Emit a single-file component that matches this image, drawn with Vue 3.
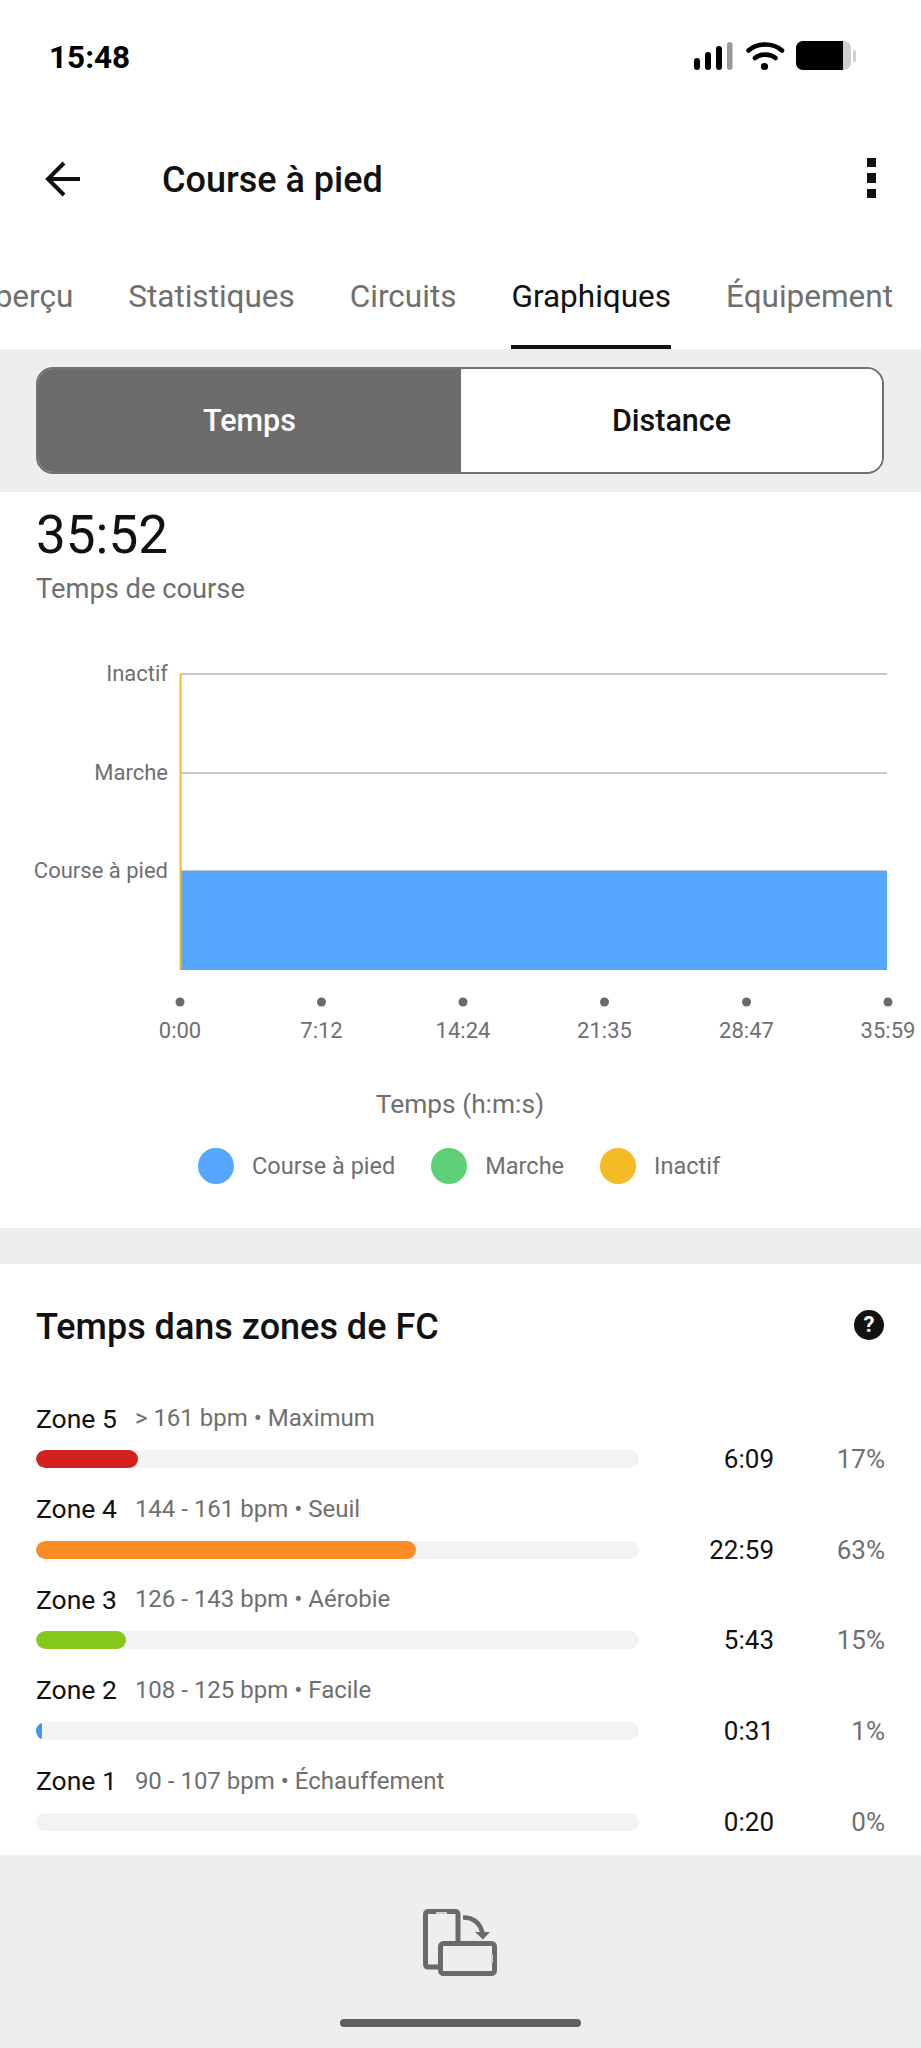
<template>
  <div class="page">
    <div class="status-bar">
      <span class="clock">15:48</span>
      <svg class="status-icons" width="163" height="32" viewBox="0 0 163 32">
        <rect x="0" y="17" width="6" height="12" rx="3" fill="#000" />
        <rect x="11" y="11" width="6" height="18" rx="3" fill="#000" />
        <rect x="22" y="5" width="6" height="24" rx="3" fill="#000" />
        <rect x="33" y="1" width="5.5" height="28" rx="2.7" fill="#999" />
        <path d="M54.5 9.5C63.5 1.5 79 1.5 88 9.5" fill="none" stroke="#000" stroke-width="4.6" stroke-linecap="round" />
        <path d="M61 17C66.5 12.5 76 12.5 81.5 17" fill="none" stroke="#000" stroke-width="4.6" stroke-linecap="round" />
        <circle cx="70.5" cy="25.5" r="3.6" fill="#000" />
        <path d="M109 0H149V29H109C105 29 102 26 102 22V7C102 3 105 0 109 0Z" fill="#000" />
        <path d="M149 0C154 0 157 3 157 7V22C157 26 154 29 149 29Z" fill="#cfcfcf" />
        <rect x="159" y="9" width="3" height="12" rx="1.5" fill="#cfcfcf" />
      </svg>
    </div>

    <header class="app-header">
      <svg class="back-icon" width="36" height="36" viewBox="0 0 36 36">
        <path d="M19 2L3 18L19 34M3 18H35" fill="none" stroke="#111" stroke-width="4" />
      </svg>
      <h1 class="title">Course à pied</h1>
      <div class="kebab">
        <span></span>
        <span></span>
        <span></span>
      </div>
    </header>

    <nav class="tabs">
      <span v-for="tab in tabs" :key="tab" class="tab" :class="{ active: tab === 'Graphiques' }">{{ tab }}</span>
    </nav>

    <div class="segment-wrap">
      <div class="segment">
        <button class="segment-btn selected">Temps</button>
        <button class="segment-btn">Distance</button>
      </div>
    </div>

    <section class="chart-card">
      <div class="total">35:52</div>
      <div class="total-label">Temps de course</div>

      <svg class="chart" width="921" height="549" viewBox="0 0 921 549">
        <g v-for="row in yRows" :key="row.label">
          <line x1="181" x2="887" :y1="row.y" :y2="row.y" stroke="#c9c9c9" stroke-width="2" />
          <text x="168" :y="row.y + 7" text-anchor="end" class="axis-text">{{ row.label }}</text>
        </g>
        <rect x="181" y="272" width="706" height="99" fill="#55a6ff" />
        <line x1="180.5" x2="180.5" y1="75" y2="371" stroke="#f5bb27" stroke-width="2" />
        <g v-for="tick in xTicks" :key="tick.label">
          <circle :cx="tick.x" cy="403" r="4.5" fill="#6a6a6a" />
          <text :x="tick.x" y="439" text-anchor="middle" class="axis-text">{{ tick.label }}</text>
        </g>
        <text x="460" y="514" text-anchor="middle" class="axis-title">Temps (h:m:s)</text>
      </svg>

      <div class="legend">
        <div v-for="item in legend" :key="item.label" class="legend-item">
          <span class="legend-dot" :style="{ background: item.color }"></span>
          <span>{{ item.label }}</span>
        </div>
      </div>
    </section>

    <section class="zones-card">
      <div class="zones-head">
        <h2 class="zones-title">Temps dans zones de FC</h2>
        <span class="help">?</span>
      </div>

      <div v-for="zone in zones" :key="zone.name" class="zone">
        <div class="zone-label">
          <span class="zone-name">{{ zone.name }}</span>
          <span class="zone-meta">{{ zone.meta }}</span>
        </div>
        <div class="zone-row">
          <div class="track">
            <div class="fill" :style="{ width: zone.width + 'px', background: zone.color }"></div>
          </div>
          <span class="zone-time">{{ zone.time }}</span>
          <span class="zone-pct">{{ zone.pct }}</span>
        </div>
      </div>
    </section>

    <footer class="bottom">
      <svg class="rotate-icon" width="74" height="67" viewBox="0 0 74 67">
        <path d="M18 58H5.500C3.500 58 2.500 57 2.500 55V5.500C2.500 3.500 3.500 2.500 5.500 2.500H32C34 2.500 35 3.500 35 5.500V34" fill="none" stroke="#6a6a6a" stroke-width="5" />
        <rect x="17.500" y="34.500" width="54" height="30" rx="3" fill="none" stroke="#6a6a6a" stroke-width="5" />
        <path d="M13 4H24" stroke="#cfcfcf" stroke-width="2" />
        <path d="M69 45V54" stroke="#cfcfcf" stroke-width="2" />
        <path d="M40 8.500C50 8.500 57 14 59.500 24" fill="none" stroke="#6a6a6a" stroke-width="4.500" />
        <path d="M52 23H67L60 30.500Z" fill="#6a6a6a" />
      </svg>
      <div class="home-bar"></div>
    </footer>
  </div>
</template>

<script setup>
const tabs = ['Aperçu', 'Statistiques', 'Circuits', 'Graphiques', 'Équipement']

const yRows = [
  { label: 'Inactif', y: 75 },
  { label: 'Marche', y: 174 },
  { label: 'Course à pied', y: 272 }
]

const xTicks = [
  { label: '0:00', x: 180 },
  { label: '7:12', x: 321.5 },
  { label: '14:24', x: 463 },
  { label: '21:35', x: 604.500 },
  { label: '28:47', x: 746.500 },
  { label: '35:59', x: 888 }
]

const legend = [
  { label: 'Course à pied', color: '#55a6ff' },
  { label: 'Marche', color: '#5fd078' },
  { label: 'Inactif', color: '#f5bb27' }
]

const zones = [
  { name: 'Zone 5', meta: '> 161 bpm • Maximum', time: '6:09', pct: '17%', width: 102, color: '#d32020' },
  { name: 'Zone 4', meta: '144 - 161 bpm • Seuil', time: '22:59', pct: '63%', width: 380, color: '#fb8b24' },
  { name: 'Zone 3', meta: '126 - 143 bpm • Aérobie', time: '5:43', pct: '15%', width: 90, color: '#84c91c' },
  { name: 'Zone 2', meta: '108 - 125 bpm • Facile', time: '0:31', pct: '1%', width: 6, color: '#3f95f0' },
  { name: 'Zone 1', meta: '90 - 107 bpm • Échauffement', time: '0:20', pct: '0%', width: 0, color: '#3f95f0' }
]
</script>

<style>
body {
  background: #fff;
}
</style>

<style scoped>
.page {
  width: 921px;
  height: 2048px;
  overflow: hidden;
  display: flex;
  flex-direction: column;
  background: #eeeeee;
  font-family: Roboto, "Liberation Sans", sans-serif;
  color: #111;
}

.status-bar {
  height: 114px;
  background: #fff;
  display: flex;
  justify-content: space-between;
  align-items: center;
  padding: 0 64px 0 49px;
  box-sizing: border-box;
}

.clock {
  font-size: 31.500px;
  font-weight: 700;
  color: #000;
}

.app-header {
  height: 130px;
  background: #fff;
  display: flex;
  align-items: center;
  padding: 0 45px 0 45px;
  box-sizing: border-box;
}

.title {
  margin: 2px 0 0 81px;
  flex: 1;
  font-size: 36px;
  font-weight: 500;
}

.kebab {
  display: flex;
  flex-direction: column;
  gap: 6px;
  margin-top: -2px;
}

.kebab span {
  display: block;
  width: 9px;
  height: 9.500px;
  background: #111;
}

.tabs {
  height: 105px;
  background: #fff;
  display: flex;
  justify-content: flex-end;
  gap: 55px;
  padding-right: 28px;
  overflow: hidden;
  box-sizing: border-box;
}

.tab {
  flex-shrink: 0;
  font-size: 31.500px;
  line-height: 105px;
  height: 105px;
  box-sizing: border-box;
  color: #6f6f6f;
  white-space: nowrap;
}

.tab.active {
  color: #111;
  border-bottom: 4px solid #111;
}

.segment-wrap {
  height: 143px;
  padding: 18px 37px 0 36px;
  box-sizing: border-box;
}

.segment {
  height: 107px;
  display: grid;
  grid-template-columns: 423px 1fr;
  border: 2px solid #727272;
  border-radius: 17px;
  overflow: hidden;
  background: #fff;
  box-sizing: border-box;
}

.segment-btn {
  border: none;
  background: #fff;
  font-family: inherit;
  font-size: 30.500px;
  font-weight: 500;
  color: #111;
  padding: 0;
}

.segment-btn.selected {
  background: #6b6b6b;
  color: #fff;
}

.chart-card {
  height: 736px;
  background: #fff;
  overflow: hidden;
}

.total {
  margin: 11px 0 0 36px;
  font-size: 53px;
  line-height: 64px;
}

.total-label {
  margin: 2px 0 0 36px;
  font-size: 27.300px;
  line-height: 40px;
  color: #6f6f6f;
}

.chart {
  display: block;
  margin-top: -10px;
}

.axis-text {
  font-size: 22px;
  fill: #6f6f6f;
}

.axis-title {
  font-size: 26.300px;
  fill: #6f6f6f;
}

.legend {
  margin: 0 0 0 198px;
  display: flex;
  gap: 36px;
}

.legend-item {
  display: flex;
  align-items: center;
  gap: 18px;
  font-size: 23.500px;
  color: #6f6f6f;
}

.legend-dot {
  display: block;
  width: 36px;
  height: 36px;
  border-radius: 50%;
}

.zones-card {
  margin-top: 36px;
  height: 591px;
  background: #fff;
  padding: 0 36px;
  box-sizing: border-box;
}

.zones-head {
  height: 122px;
  padding-top: 39px;
  box-sizing: border-box;
  display: flex;
  justify-content: space-between;
  align-items: flex-start;
}

.zones-title {
  margin: 0;
  font-size: 36px;
  line-height: 48px;
  font-weight: 500;
}

.help {
  width: 30px;
  height: 30px;
  margin: 7px 1px 0 0;
  border-radius: 50%;
  background: #111;
  color: #fff;
  font-size: 22px;
  font-weight: 700;
  line-height: 30px;
  text-align: center;
}

.zone {
  height: 90.660px;
}

.zone-label {
  height: 64px;
  display: flex;
  align-items: center;
  gap: 18px;
}

.zone-name {
  font-size: 26.500px;
}

.zone-meta {
  font-size: 24px;
  color: #6f6f6f;
}

.zone-row {
  display: flex;
  align-items: center;
  height: 18px;
}

.track {
  width: 603px;
  height: 18px;
  border-radius: 9px;
  background: #f3f3f3;
  overflow: hidden;
}

.fill {
  height: 100%;
  border-radius: 9px;
}

.zone-time {
  width: 135px;
  text-align: right;
  font-size: 26px;
}

.zone-pct {
  width: 111px;
  text-align: right;
  font-size: 26px;
  color: #6f6f6f;
}

.bottom {
  flex: 1;
  display: flex;
  flex-direction: column;
  align-items: center;
}

.rotate-icon {
  margin-top: 54px;
  margin-left: -1px;
}

.home-bar {
  margin-top: 43px;
  width: 241px;
  height: 8px;
  border-radius: 4px;
  background: #606060;
}
</style>
